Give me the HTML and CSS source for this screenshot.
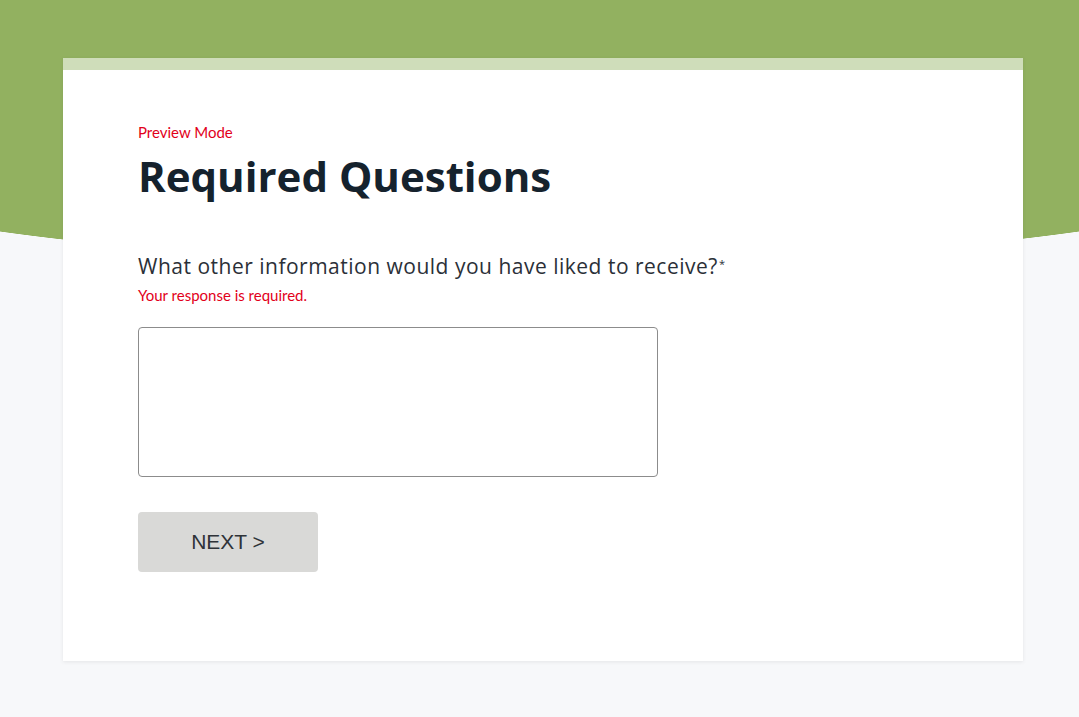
FILE: index.html
```html
<!DOCTYPE html>
<html lang="en">
<head>
<meta charset="utf-8">
<title>Required Questions</title>
<link rel="stylesheet" href="styles.css">
</head>
<body>
<div class="hero"></div>
<main class="card">
  <div class="card-stripe"></div>
  <div class="card-body">
    <p class="preview">Preview Mode</p>
    <h1 class="title">Required Questions</h1>
    <label class="question" for="answer">What other information would you have liked to receive?<span class="req">*</span></label>
    <p class="error">Your response is required.</p>
    <textarea id="answer" class="answer"></textarea>
    <button class="next" type="button">NEXT &gt;</button>
  </div>
</main>
</body>
</html>
```
FILE: styles.css
```css
html, body {
  margin: 0;
  padding: 0;
}
body {
  background: #f7f8fa;
  overflow: hidden;
  height: 717px;
  font-family: Lato, "Liberation Sans", sans-serif;
}
.hero {
  height: 264px;
  background:
    radial-gradient(800px 123px at 50% 141px, #92b160 99.6%, rgba(146, 177, 96, 0) 100%) no-repeat,
    linear-gradient(#92b160, #92b160) top left / 100% 142px no-repeat;
}
.card {
  display: block;
  margin: -206px 56px 0 63px;
  background: #fff;
  box-shadow: 0 1px 4px rgba(0, 0, 0, 0.08);
  position: relative;
}
.card-stripe {
  height: 12px;
  background: #cfddba;
}
.card-body {
  display: flex;
  flex-direction: column;
  align-items: flex-start;
  padding: 52px 75px 89px;
}
.preview {
  margin: 0;
  font-size: 15px;
  line-height: 20px;
  color: #e2001a;
}
.title {
  margin: 9px 0 0;
  font-family: "Open Sans", Lato, sans-serif;
  font-size: 42px;
  line-height: 50px;
  font-weight: 700;
  color: #15222d;
}
.question {
  margin-top: 49px;
  font-family: "Open Sans", Lato, sans-serif;
  font-size: 21px;
  line-height: 28px;
  font-weight: 500;
  letter-spacing: 0.5px;
  color: #2b3038;
}
.req {
  font-size: 11px;
  letter-spacing: 0;
  vertical-align: 6px;
  margin-left: 1px;
}
.error {
  margin: 5px 0 0;
  font-size: 15px;
  line-height: 20px;
  color: #e2001a;
}
.answer {
  margin-top: 22px;
  width: 520px;
  height: 150px;
  box-sizing: border-box;
  border: 1px solid #8c8c8c;
  border-radius: 4px;
  resize: none;
  background: #fff;
}
.next {
  margin-top: 35px;
  width: 180px;
  height: 60px;
  border: none;
  border-radius: 4px;
  background: #d9d9d7;
  color: #2f3338;
  font-family: "Liberation Sans", Arial, sans-serif;
  font-size: 21px;
}
```
